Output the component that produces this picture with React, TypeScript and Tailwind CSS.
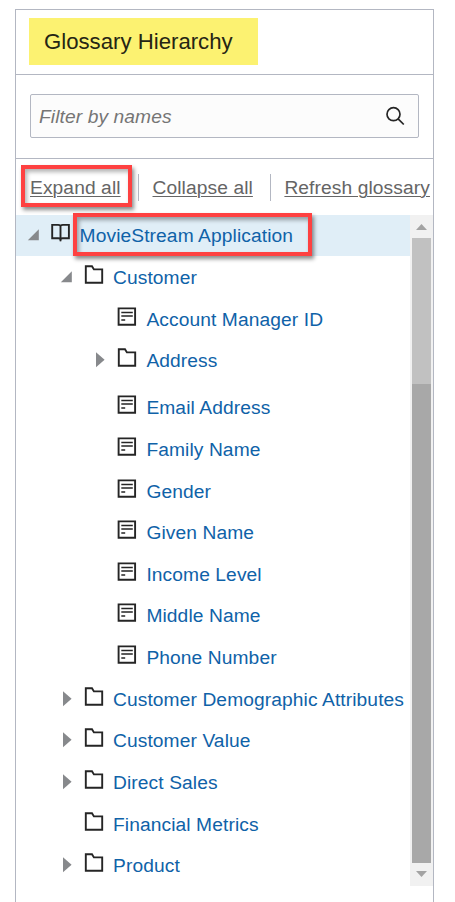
type Kind = 'book' | 'folder' | 'term';
type Arrow = 'open' | 'closed' | 'none';

interface Row {
  label: string;
  kind: Kind;
  arrow: Arrow;
  indent: string;
  height: string;
}

const L0 = 'pl-[10px]';
const L1 = 'pl-[43px]';
const L2 = 'pl-[76.4px]';

const rows: Row[] = [
  { label: 'MovieStream Application', kind: 'book', arrow: 'open', indent: L0, height: 'h-[42px]' },
  { label: 'Customer', kind: 'folder', arrow: 'open', indent: L1, height: 'h-[42px]' },
  { label: 'Account Manager ID', kind: 'term', arrow: 'none', indent: L2, height: 'h-[41px]' },
  { label: 'Address', kind: 'folder', arrow: 'closed', indent: L2, height: 'h-[47px]' },
  { label: 'Email Address', kind: 'term', arrow: 'none', indent: L2, height: 'h-[42px]' },
  { label: 'Family Name', kind: 'term', arrow: 'none', indent: L2, height: 'h-[42px]' },
  { label: 'Gender', kind: 'term', arrow: 'none', indent: L2, height: 'h-[41px]' },
  { label: 'Given Name', kind: 'term', arrow: 'none', indent: L2, height: 'h-[42px]' },
  { label: 'Income Level', kind: 'term', arrow: 'none', indent: L2, height: 'h-[41px]' },
  { label: 'Middle Name', kind: 'term', arrow: 'none', indent: L2, height: 'h-[42px]' },
  { label: 'Phone Number', kind: 'term', arrow: 'none', indent: L2, height: 'h-[42px]' },
  { label: 'Customer Demographic Attributes', kind: 'folder', arrow: 'closed', indent: L1, height: 'h-[41px]' },
  { label: 'Customer Value', kind: 'folder', arrow: 'closed', indent: L1, height: 'h-[42px]' },
  { label: 'Direct Sales', kind: 'folder', arrow: 'closed', indent: L1, height: 'h-[42px]' },
  { label: 'Financial Metrics', kind: 'folder', arrow: 'none', indent: L1, height: 'h-[41px]' },
  { label: 'Product', kind: 'folder', arrow: 'closed', indent: L1, height: 'h-[42px]' },
];

function NodeIcon({ kind }: { kind: Kind }) {
  return (
    <svg className="mt-[8px] h-5 w-5 shrink-0" viewBox="0 0 20 20" fill="none" stroke="#252525" strokeWidth="1.9">
      {kind === 'book' && (
        <path d="M9.5 2.8V18.2M9.5 2.8C8.8 2.1 8.1 1.9 7.1 1.9H1.2V15.2H7.5C8.5 15.2 9.1 15.5 9.5 16.4C9.9 15.5 10.5 15.2 11.5 15.2H17.9V1.9H11.9C10.9 1.9 10.2 2.1 9.5 2.8Z" />
      )}
      {kind === 'folder' && <path d="M1.8 1.3H8L9.9 4.4H18.2V17.8H1.8Z" />}
      {kind === 'term' && (
        <>
          <path d="M1.6 1.4H18.1V17.8H1.6Z" />
          <path strokeWidth="1.5" d="M4.3 5.6H15.8M4.3 9.1H15.8M4.3 13H8.2" />
        </>
      )}
    </svg>
  );
}

function Disclosure({ arrow }: { arrow: Arrow }) {
  return (
    <svg className="mt-[12px] h-4 w-[14px] shrink-0" viewBox="0 0 14 16" fill="#87898c">
      {arrow === 'open' && <path d="M12.8 2.2V13.2H1.8Z" />}
      {arrow === 'closed' && <path d="M4 0.2L12.6 7.7L4 15.2Z" />}
    </svg>
  );
}

function TreeRow({ row, selected }: { row: Row; selected: boolean }) {
  return (
    <li className={`flex items-start ${row.indent} ${row.height}`}>
      <Disclosure arrow={row.arrow} />
      <span className="ml-[11px] flex">
        <NodeIcon kind={row.kind} />
      </span>
      <span
        className={
          selected
            ? 'ml-[2px] -mt-[2px] h-[43px] w-[239px] border-4 border-[#fe4141] pl-[2.6px] pt-[6px] leading-[26px] whitespace-nowrap text-[#0f62a8] shadow-[2px_3px_4px_rgba(0,0,0,0.45),inset_2px_3px_4px_rgba(0,0,0,0.35)]'
            : 'ml-[9px] mt-[8px] leading-[26px] whitespace-nowrap text-[#0f62a8]'
        }
      >
        {row.label}
      </span>
    </li>
  );
}

function Scrollbar() {
  return (
    <div className="flex h-[671px] w-[23px] shrink-0 flex-col items-center bg-[#f1f1f1]">
      <svg className="h-[23px] w-[23px] shrink-0" viewBox="0 0 23 23" fill="#a3a3a3">
        <path d="M6 15L11.5 9L17 15Z" />
      </svg>
      <div className="h-[146px] w-[19px] bg-[#c1c1c1]" />
      <div className="h-[479px] w-[19px] bg-[#a8a8a8]" />
      <svg className="h-[23px] w-[23px] shrink-0" viewBox="0 0 23 23" fill="#a3a3a3">
        <path d="M6 8L11.5 14L17 8Z" />
      </svg>
    </div>
  );
}

export default function App() {
  return (
    <div className="h-[902px] w-[455px] overflow-hidden bg-white pl-[15px] pt-[9px] font-['Liberation_Sans',Arial,sans-serif] text-[19.2px] tracking-[0.1px]">
      <div className="flex h-[893px] w-[419px] flex-col border border-b-0 border-[#b3b7c2]">
        <header className="h-[65px] shrink-0 border-b border-[#b3b7c2] pl-[13px] pt-[8px]">
          <h1 className="h-[47px] w-[229px] bg-[#fcf271] pl-[15px] text-[22.2px] leading-[47px] tracking-normal whitespace-nowrap text-[#252514]">
            Glossary Hierarchy
          </h1>
        </header>
        <div className="h-[84px] shrink-0 border-b border-[#b3b7c2] pl-[14px] pt-[19px]">
          <div className="flex h-[44px] w-[389px] items-center justify-between rounded-[2px] border border-[#b3b7c2] bg-[#fcfcfc] pl-[8px] pr-[13px]">
            <span className="pt-[2px] text-[#757575] italic">Filter by names</span>
            <svg className="h-5 w-5" viewBox="0 0 20 20" fill="none" stroke="#252525" strokeWidth="1.7">
              <circle cx="8.5" cy="8.2" r="6.5" />
              <path d="M13.1 12.8L18.8 18.5" />
            </svg>
          </div>
        </div>
        <nav className="flex h-[56px] shrink-0 pl-[5px] pt-[6px] text-[#656565]">
          <div className="relative h-[42px] w-[111px] shrink-0 border-4 border-[#fe4141] pl-[5px] leading-[37px] whitespace-nowrap shadow-[2px_3px_4px_rgba(0,0,0,0.45),inset_2px_3px_4px_rgba(0,0,0,0.3)]">
            <span className="underline decoration-1 underline-offset-[2px]">Expand all</span>
          </div>
          <div className="mt-[9px] ml-[6px] h-[27px] w-px shrink-0 bg-[#b3b7c2]" />
          <span className="ml-[13.5px] leading-[45px] whitespace-nowrap underline decoration-1 underline-offset-[2px]">Collapse all</span>
          <div className="mt-[9px] ml-[17px] h-[27px] w-px shrink-0 bg-[#b3b7c2]" />
          <span className="ml-[13.5px] leading-[45px] whitespace-nowrap underline decoration-1 underline-offset-[2px]">Refresh glossary</span>
        </nav>
        <div className="flex">
          <ul className="w-[394px] bg-[linear-gradient(#e0eef7_41px,transparent_41px)]">
            {rows.map((row, i) => (
              <TreeRow key={row.label} row={row} selected={i === 0} />
            ))}
          </ul>
          <Scrollbar />
        </div>
      </div>
    </div>
  );
}
